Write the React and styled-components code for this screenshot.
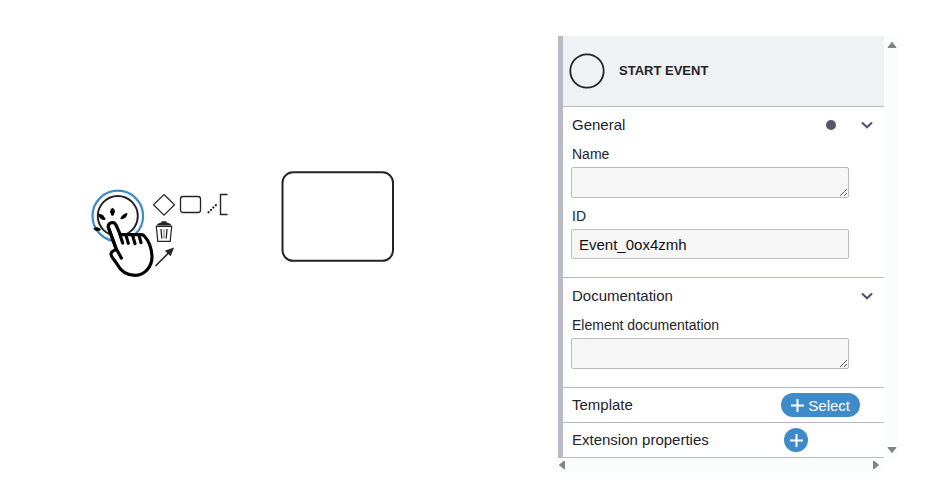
import { useState } from 'react';
import styled, { createGlobalStyle } from 'styled-components';

const GlobalStyle = createGlobalStyle`
  * {
    box-sizing: border-box;
  }
  body {
    margin: 0;
    background: #fff;
    color: #22242a;
    font-family: "Liberation Sans", Arial, sans-serif;
  }
`
const Page = styled.div`
  display: grid;
  grid-template-columns: minmax(0, 1fr) 344px;
  min-height: 100vh;
  padding: 36px 30px 0 0;
`

/* canvas */
const Canvas = styled.main`
  position: relative;
`
const Node = styled.svg`
  position: absolute;
  left: ${props => props.$x}px;
  top: ${props => props.$y}px;
  fill: none;
  stroke: #22242a;
  stroke-width: 2;
`
const ContextPad = styled.div`
  position: absolute;
  left: 150px;
  top: 156px;
  display: grid;
  grid-template-columns: repeat(3, 27px);
  grid-auto-rows: 26px;
`
const PadButton = styled.button`
  display: flex;
  align-items: center;
  justify-content: center;
  padding: 0;
  border: 0;
  background: none;
  color: #22242a;
  cursor: pointer;
  grid-column: ${props => props.$column || 'auto'};

  svg {
    display: block;
    fill: none;
    stroke: currentColor;
  }
`
const Pointer = styled.svg`
  position: absolute;
  left: 80px;
  top: 144px;
  pointer-events: none;
`

/* properties panel */
const Panel = styled.aside`
  display: grid;
  grid-template-columns: minmax(0, 1fr) 14px;
  align-self: start;
`
const PanelBody = styled.div`
  margin-left: 4px;
  border-left: 5px solid #b9bac7;
`
const Header = styled.header`
  display: flex;
  align-items: center;
  gap: 14px;
  height: 71px;
  padding: 0 6px;
  background: #f0f1f3;
  border-bottom: 1px solid #b9b9c9;
`
const Title = styled.h1`
  margin: 0;
  font-size: 13px;
  line-height: 16px;
  text-transform: uppercase;
`
const Group = styled.section`
  border-bottom: 1px solid #b9b9c9;
  padding-bottom: ${props => (props.$open ? 18 : 0)}px;
`
const GroupHeader = styled.div`
  display: flex;
  align-items: center;
  justify-content: space-between;
  height: ${props => (props.$compact ? 34 : 36)}px;
  padding: 0 ${props => props.$right || 10}px 0 9px;
`
const GroupTitle = styled.h2`
  margin: 0;
  font-size: 15px;
  font-weight: 400;
  line-height: 18px;
`
const Toggle = styled.button`
  display: flex;
  align-items: center;
  gap: 24px;
  padding: 0;
  border: 0;
  background: none;
  cursor: pointer;
`
const Dot = styled.span`
  width: 10px;
  height: 10px;
  border-radius: 50%;
  background: #57556a;
`
const Entry = styled.div`
  padding: 0 35px 0 8px;

  & + & {
    margin-top: 7px;
  }
`
const Label = styled.label`
  display: block;
  padding: 2px 1px 4px;
  font-size: 14px;
  line-height: 18px;
`
const Input = styled.input`
  display: block;
  width: 100%;
  height: 30px;
  padding: 0 7px;
  border: 1px solid #b9b9c9;
  border-radius: 2px;
  background: #f6f6f6;
  color: #111;
  font: 15px "Liberation Sans", Arial, sans-serif;
`
const TextArea = styled(Input)`
  height: 31px;
  padding: 5px 7px;
  resize: vertical;
  overflow: hidden;
`
const AddButton = styled.button`
  display: flex;
  align-items: center;
  justify-content: center;
  gap: 4px;
  height: 24px;
  min-width: 24px;
  padding: 0 ${props => (props.$round ? 0 : 10)}px;
  border: 0;
  border-radius: 12px;
  background: #3f8ac9;
  color: #fff;
  font: 15px "Liberation Sans", Arial, sans-serif;
  cursor: pointer;
`
const VerticalBar = styled.div`
  display: flex;
  flex-direction: column;
  align-items: center;
  justify-content: space-between;
  padding: 5px 0 4px 2px;
  background: #fbfdfc;
`
const HorizontalBar = styled.div`
  display: flex;
  align-items: center;
  justify-content: space-between;
  height: 14px;
  padding: 0 3px;
  background: #fbfdfc;
`
const ArrowIcon = styled.svg`
  display: block;
  fill: #858585;
  stroke: #858585;
  stroke-linejoin: round;
  transform: rotate(${props => props.$turn || 0}deg);
`

const ScrollArrow = ({ turn }) => (
  <ArrowIcon $turn={turn} width="10" height="8" viewBox="0 0 10 8">
    <path d="M5 1.3 9 6.5H1z" />
  </ArrowIcon>
)

const Chevron = () => (
  <svg width="14" height="10" viewBox="0 0 14 10" fill="none" stroke="#57556a" strokeWidth="2.2">
    <path d="M2 2.5 7 7.2 12 2.5" />
  </svg>
)

const Plus = () => (
  <svg width="13" height="13" viewBox="0 0 13 13" stroke="#fff" strokeWidth="2">
    <path d="M6.5 0v13M0 6.5h13" />
  </svg>
)

const HandPointer = () => (
  <Pointer width="80" height="100" viewBox="0 0 240 300">
    <g fill="#fff" stroke="#000" strokeWidth="9.5" strokeLinejoin="round" strokeLinecap="round">
      <path d="M109 209C101 211 93 216 93 222C93 231 104 240 111 252C122 273 140 286 165 286C196 286 216 258 216 230C215 205 205 181 193 168Q190 164 183 164L121 164L108 135C102 122 83 128 85 142Z" />
      <path d="M85 142 109 207 124 234M120 164 128 189M138 166 145 190M158 167 165 191M177 166 183 188" fill="none" />
    </g>
    <g fill="#000">
      <path d="M97 83C102 86 105 90 105 95L100 107H95L90 96C90 91 93 87 97 83Z" />
      <path d="M55 103C63 100 71 106 77 117L73 121C62 119 56 113 55 103Z" />
      <path d="M142 99C136 98 124 106 121 116L125 118C136 115 143 108 142 99Z" />
      <path d="M40 146C46 140 54 141 62 147V151C53 155 45 153 40 146Z" />
    </g>
  </Pointer>
)

const CollapsibleGroup = ({ title, edited, children }) => {
  const [open, setOpen] = useState(true)
  return (
    <Group $open={open}>
      <GroupHeader>
        <GroupTitle>{title}</GroupTitle>
        <Toggle aria-label={`Toggle ${title}`} aria-expanded={open} onClick={() => setOpen(!open)}>
          {edited && <Dot />}
          <Chevron />
        </Toggle>
      </GroupHeader>
      {open && children}
    </Group>
  )
}

const App = () => {
  const [id, setId] = useState('Event_0ox4zmh')
  return (
    <Page>
      <GlobalStyle />
      <Canvas>
        <Node $x={90} $y={153} width="56" height="54">
          <circle cx="27.8" cy="27" r="25.3" stroke="#3f8ac9" strokeWidth="2.2" />
          <circle cx="27.8" cy="27" r="20" />
        </Node>
        <Node $x={281} $y={135} width="114" height="92">
          <rect x="1.5" y="1.3" width="110.5" height="88.5" rx="10.5" />
        </Node>
        <ContextPad>
          <PadButton aria-label="Append gateway">
            <svg width="24" height="24" viewBox="0 0 24 24">
              <path d="M12 1.5 22.5 11.8 12 22.2 1.5 11.8Z" strokeWidth="1.2" />
            </svg>
          </PadButton>
          <PadButton aria-label="Append task">
            <svg width="24" height="24" viewBox="0 0 24 24">
              <rect x="1.5" y="3.5" width="20" height="16" rx="2.5" strokeWidth="1.3" />
            </svg>
          </PadButton>
          <PadButton aria-label="Add text annotation">
            <svg width="24" height="24" viewBox="0 0 24 24">
              <path d="M21.5 1.5H14.5V21.5H21.5" strokeWidth="1.4" />
              <path d="M2.5 19.3 12.2 9.8" strokeWidth="2.2" strokeLinecap="round" strokeDasharray="0.1 3.3" />
            </svg>
          </PadButton>
          <PadButton aria-label="Delete" $column={1}>
            <svg width="24" height="24" viewBox="0 0 24 24">
              <path d="M4.3 7.4H19.7L18.2 22.4H5.8Z" strokeWidth="1.2" />
              <path d="M9 10 9.8 19.5M15 10 14.2 19.5" strokeWidth="1.3" />
              <path d="M12 10V19.5" strokeWidth="0.6" />
              <path d="M4 6.4Q6 3.7 9.2 3.4L9.8 2.2H14.2L14.8 3.4Q18 3.7 20 6.4Z" fill="currentColor" stroke="none" />
            </svg>
          </PadButton>
          <PadButton aria-label="Connect" $column={1}>
            <svg width="24" height="24" viewBox="0 0 24 24">
              <path d="M3.5 21 16.5 8" strokeWidth="1.6" />
              <path d="M22 2.5 18.7 11.2 12.8 5.8Z" fill="currentColor" stroke="none" />
            </svg>
          </PadButton>
        </ContextPad>
        <HandPointer />
      </Canvas>

      <Panel>
        <PanelBody>
          <Header>
            <svg width="36" height="36" viewBox="0 0 36 36" fill="none" stroke="#22242a" strokeWidth="1.8">
              <circle cx="18" cy="18" r="16.7" />
            </svg>
            <Title>Start Event</Title>
          </Header>
          <CollapsibleGroup title="General" edited>
            <Entry>
              <Label htmlFor="name">Name</Label>
              <TextArea as="textarea" id="name" rows={1} />
            </Entry>
            <Entry>
              <Label htmlFor="id">ID</Label>
              <Input id="id" value={id} onChange={e => setId(e.target.value)} />
            </Entry>
          </CollapsibleGroup>
          <CollapsibleGroup title="Documentation">
            <Entry>
              <Label htmlFor="documentation">Element documentation</Label>
              <TextArea as="textarea" id="documentation" rows={1} />
            </Entry>
          </CollapsibleGroup>
          <Group>
            <GroupHeader $compact $right={24}>
              <GroupTitle>Template</GroupTitle>
              <AddButton><Plus />Select</AddButton>
            </GroupHeader>
          </Group>
          <Group>
            <GroupHeader $compact $right={76}>
              <GroupTitle>Extension properties</GroupTitle>
              <AddButton $round aria-label="Add extension property"><Plus /></AddButton>
            </GroupHeader>
          </Group>
        </PanelBody>
        <VerticalBar>
          <ScrollArrow />
          <ScrollArrow turn={180} />
        </VerticalBar>
        <HorizontalBar>
          <ScrollArrow turn={-90} />
          <ScrollArrow turn={90} />
        </HorizontalBar>
      </Panel>
    </Page>
  )
}

export default App
